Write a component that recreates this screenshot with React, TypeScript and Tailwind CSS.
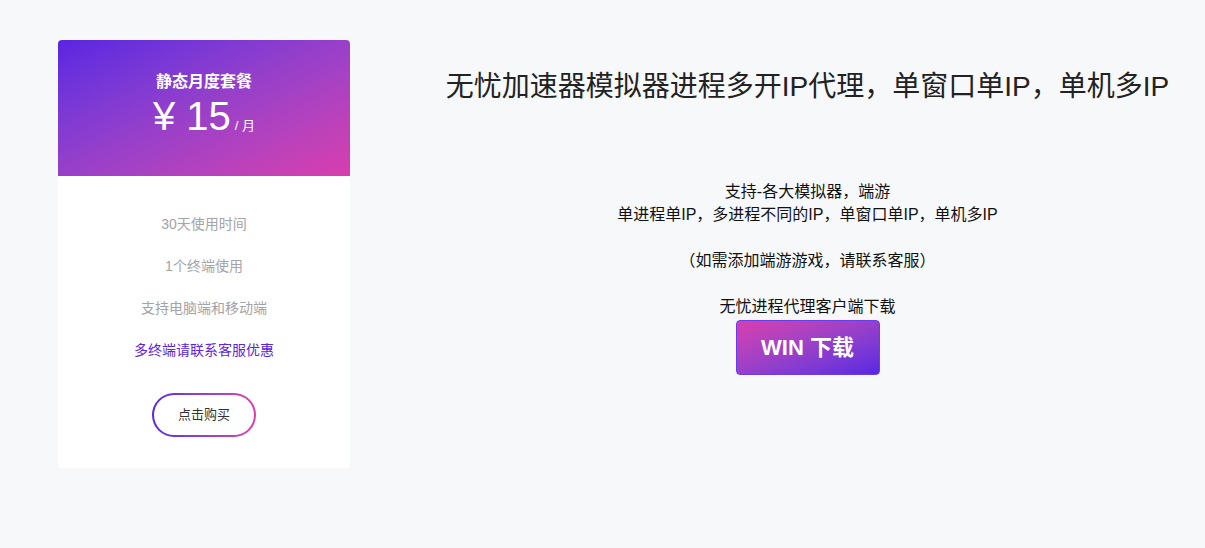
import React from "react";

const FONT = { fontFamily: '"Liberation Sans", "Noto Sans CJK SC", sans-serif' };

export default function App() {
  return (
    <div className="w-full min-h-[548px] bg-[#f7f8fa]" style={FONT}>
      <div className="flex items-start pl-[58px] pt-[40px]">
        <div className="w-[292px] bg-white rounded-[4px] overflow-hidden">
          <div className="h-[136px] bg-gradient-to-br from-[#5a24e2] to-[#d93dad] text-white text-center pt-[30px]">
            <div className="text-[16px] font-bold leading-[24px]">静态月度套餐</div>
            <div className="flex items-baseline justify-center leading-[48px] mt-[-2px]">
              <span className="text-[40px]">¥ 15</span>
              <span className="text-[13px] ml-[4px]">/ 月</span>
            </div>
          </div>
          <div className="pt-[27px] pb-[31px] flex flex-col items-center">
            <div className="text-[14px] leading-[42px] text-[#a3a3a8]">30天使用时间</div>
            <div className="text-[14px] leading-[42px] text-[#a3a3a8]">1个终端使用</div>
            <div className="text-[14px] leading-[42px] text-[#a3a3a8]">支持电脑端和移动端</div>
            <div className="text-[14px] leading-[42px] text-[#5b24e0]">多终端请联系客服优惠</div>
            <div className="mt-[22px] w-[104px] h-[44px] rounded-full p-[2px] bg-gradient-to-r from-[#5a24e2] to-[#d93dad]">
              <div className="w-full h-full rounded-full bg-white flex items-center justify-center text-[13px] text-[#333]">
                点击购买
              </div>
            </div>
          </div>
        </div>
        <div className="flex-1 ml-[60px] flex flex-col items-center text-center">
          <div className="text-[28px] leading-[40px] text-[#222] mt-[27px]">
            无忧加速器模拟器进程多开IP代理，单窗口单IP，单机多IP
          </div>
          <div className="mt-[73px] text-[16px] leading-[23px] text-[#111]">
            <div>支持-各大模拟器，端游</div>
            <div>单进程单IP，多进程不同的IP，单窗口单IP，单机多IP</div>
            <div>&nbsp;</div>
            <div>（如需添加端游游戏，请联系客服）</div>
            <div>&nbsp;</div>
            <div>无忧进程代理客户端下载</div>
          </div>
          <div className="mt-[2px] w-[144px] h-[55px] rounded-[4px] border border-[#6a3cf0] bg-gradient-to-br from-[#d93dad] to-[#5a24e2] flex items-center justify-center text-white text-[22px] font-bold">
            WIN 下载
          </div>
        </div>
      </div>
    </div>
  );
}
